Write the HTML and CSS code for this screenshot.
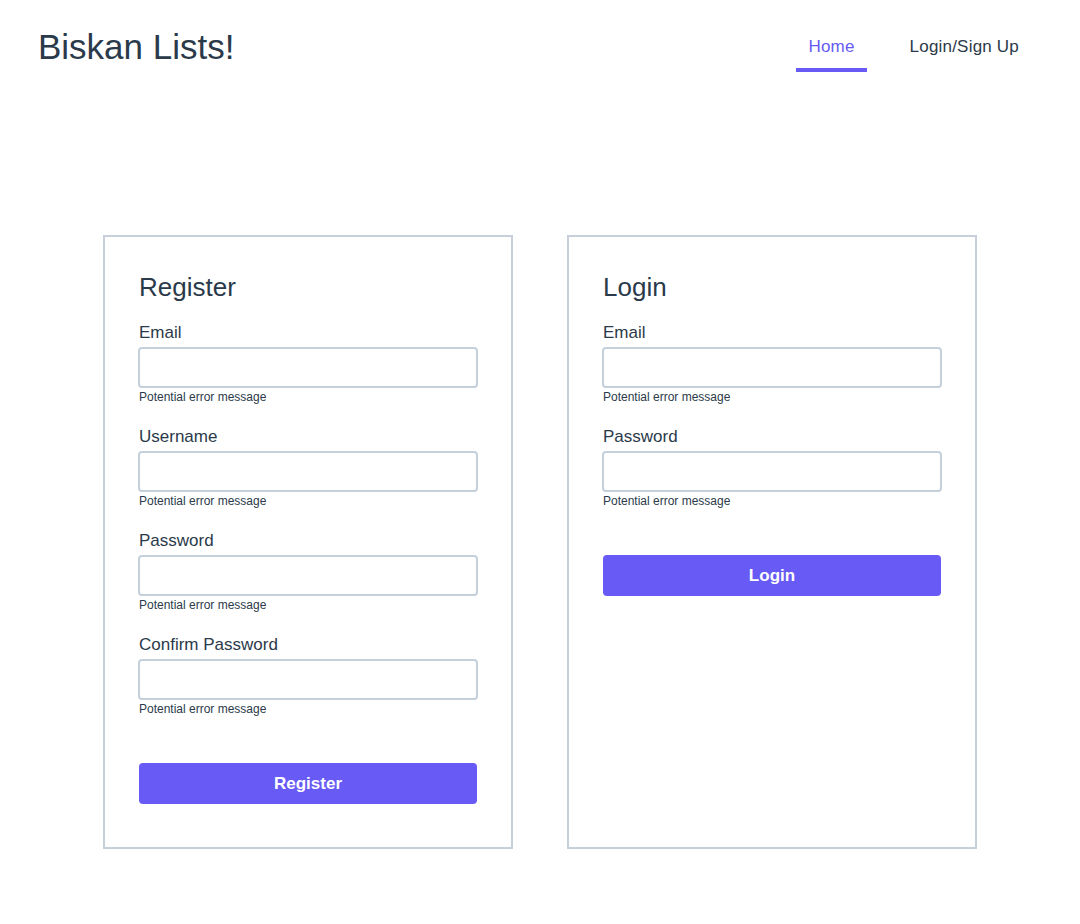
FILE: index.html
```html
<!DOCTYPE html>
<html lang="en">
<head>
<meta charset="utf-8">
<title>Biskan Lists!</title>
<link rel="stylesheet" href="styles.css">
</head>
<body>
<header class="header">
  <h1 class="brand">Biskan Lists!</h1>
  <nav class="nav">
    <a class="nav-link active" href="#">Home</a>
    <a class="nav-link" href="#">Login/Sign Up</a>
  </nav>
</header>
<main class="main">
  <section class="card">
    <h2 class="card-title">Register</h2>
    <div class="field">
      <label class="label">Email</label>
      <input class="input" type="text">
      <div class="error">Potential error message</div>
    </div>
    <div class="field">
      <label class="label">Username</label>
      <input class="input" type="text">
      <div class="error">Potential error message</div>
    </div>
    <div class="field">
      <label class="label">Password</label>
      <input class="input" type="password">
      <div class="error">Potential error message</div>
    </div>
    <div class="field">
      <label class="label">Confirm Password</label>
      <input class="input" type="password">
      <div class="error">Potential error message</div>
    </div>
    <button class="btn">Register</button>
  </section>
  <section class="card">
    <h2 class="card-title">Login</h2>
    <div class="field">
      <label class="label">Email</label>
      <input class="input" type="text">
      <div class="error">Potential error message</div>
    </div>
    <div class="field">
      <label class="label">Password</label>
      <input class="input" type="password">
      <div class="error">Potential error message</div>
    </div>
    <button class="btn">Login</button>
  </section>
</main>
</body>
</html>
```
FILE: styles.css
```css
* { box-sizing: border-box; }
html, body { margin: 0; padding: 0; background: #fff; }
body {
  font-family: "Liberation Sans", Arial, sans-serif;
  color: #2b3a4a;
}
.header {
  display: flex;
  justify-content: space-between;
  align-items: flex-start;
  padding: 27px 49px 0 38px;
  height: 72px;
}
.brand {
  margin: 0;
  font-size: 35px;
  line-height: 40px;
  font-weight: 400;
  color: #2b3a4a;
}
.nav {
  display: flex;
  gap: 31px;
  padding-top: 10px;
}
.nav-link {
  display: block;
  padding: 0 12px 11px;
  font-size: 17px;
  line-height: 20px;
  letter-spacing: 0.2px;
  color: #2b3a4a;
  text-decoration: none;
  border-bottom: 4px solid transparent;
}
.nav-link.active {
  color: #675af5;
  border-bottom-color: #675af5;
}
.main {
  display: flex;
  justify-content: center;
  gap: 54px;
  margin-top: 163px;
}
.card {
  width: 410px;
  height: 614px;
  border: 2px solid #c5d0da;
  padding: 35px 33px 0;
  display: flex;
  flex-direction: column;
}
.card-title {
  margin: 0 0 21px;
  padding-left: 1px;
  font-size: 26px;
  line-height: 30px;
  font-weight: 400;
}
.field {
  display: flex;
  flex-direction: column;
  margin-bottom: 23px;
}
.label {
  font-size: 17px;
  line-height: 20px;
  margin-bottom: 4px;
  padding-left: 1px;
}
.input {
  height: 41px;
  width: 100%;
  border: 2px solid #c5d0da;
  border-radius: 4px;
  background: #fff;
  font: inherit;
}
.error {
  font-size: 12px;
  line-height: 14px;
  padding: 2px 0 0 1px;
}
.btn {
  margin: 24px 1px 0;
  height: 41px;
  border: none;
  border-radius: 4px;
  background: #675af5;
  color: #fff;
  font-family: inherit;
  font-size: 17px;
  font-weight: 700;
}
```
